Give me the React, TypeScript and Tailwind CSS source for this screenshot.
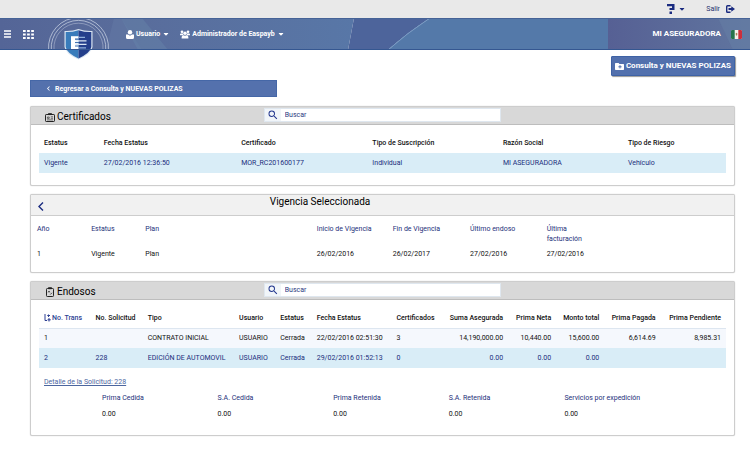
import type { ReactNode } from "react";
import { FaCaretDown } from "react-icons/fa";
import { MdChevronLeft, MdSearch } from "react-icons/md";

const certificate = [
  { label: "Estatus", value: "Vigente", width: "w-[8.7%]" },
  { label: "Fecha Estatus", value: "27/02/2016 12:36:50", width: "w-[20%]" },
  { label: "Certificado", value: "MOR_RC201600177", width: "w-[19.1%]" },
  { label: "Tipo de Suscripción", value: "Individual", width: "w-[19%]" },
  { label: "Razón Social", value: "MI ASEGURADORA", width: "w-[18.2%]" },
  { label: "Tipo de Riesgo", value: "Vehículo", width: "w-[15%]" },
];

const period = [
  { label: "Año", value: "1", width: "w-[7.7%]" },
  { label: "Estatus", value: "Vigente", width: "w-[7.7%]" },
  { label: "Plan", value: "Plan", width: "w-[24.4%]" },
  { label: "Inicio de Vigencia", value: "26/02/2016", width: "w-[10.8%]" },
  { label: "Fin de Vigencia", value: "26/02/2017", width: "w-[11%]" },
  { label: "Último endoso", value: "27/02/2016", width: "w-[10.9%]" },
  { label: "Última\nfacturación", value: "27/02/2016", width: "w-[27.5%]" },
];

const endorsementColumns = [
  { label: "No. Trans", width: "w-[7.5%]", numeric: false },
  { label: "No. Solicitud", width: "w-[7.6%]", numeric: false },
  { label: "Tipo", width: "w-[13.3%]", numeric: false },
  { label: "Usuario", width: "w-[6%]", numeric: false },
  { label: "Estatus", width: "w-[5.3%]", numeric: false },
  { label: "Fecha Estatus", width: "w-[11.6%]", numeric: false },
  { label: "Certificados", width: "w-[7.1%]", numeric: false },
  { label: "Suma Asegurada", width: "w-[9.9%]", numeric: true },
  { label: "Prima Neta", width: "w-[7%]", numeric: true },
  { label: "Monto total", width: "w-[7%]", numeric: true },
  { label: "Prima Pagada", width: "w-[8.2%]", numeric: true },
  { label: "Prima Pendiente", width: "w-[9.5%]", numeric: true },
];

const endorsements = [
  ["1", "", "CONTRATO INICIAL", "USUARIO", "Cerrada", "22/02/2016 02:51:30", "3", "14,190,000.00", "10,440.00", "15,600.00", "6,614.69", "8,985.31"],
  ["2", "228", "EDICIÓN DE AUTOMOVIL", "USUARIO", "Cerrada", "29/02/2016 01:52:13", "0", "0.00", "0.00", "0.00", "", ""],
];

const details = ["Prima Cedida", "S.A. Cedida", "Prima Retenida", "S.A. Retenida", "Servicios por expedición"];

function NavArt() {
  return (
    <svg aria-hidden="true" className="absolute inset-0 h-full w-full" preserveAspectRatio="none" viewBox="0 0 750 32">
      <defs>
        <linearGradient id="nav-left" x1="0" x2="1">
          <stop offset="0" stopColor="#546597" />
          <stop offset="0.35" stopColor="#596c9b" />
          <stop offset="1" stopColor="#5877a7" />
        </linearGradient>
        <linearGradient id="nav-right" x1="0" x2="1">
          <stop offset="0" stopColor="#566094" />
          <stop offset="1" stopColor="#60759f" />
        </linearGradient>
      </defs>
      <path d="M0 0H354L348 32H0Z" fill="url(#nav-left)" />
      <path d="M114 0H121L142 32H106Z" fill="#647aa5" opacity="0.5" />
      <path d="M121 0H142L168 32H138Z" fill="#6684aa" opacity="0.45" />
      <path d="M354 0H430Q407 15 388 32H348Z" fill="#4d649b" />
      <path d="M430 0H608V32H388Q407 15 430 0Z" fill="#5479a9" />
      <path d="M430 0Q407 15 388 32" fill="none" stroke="#789ac2" />
      <path d="M608 0H750V32H608Z" fill="url(#nav-right)" />
      <path d="M718 0H750V32H733Z" fill="#6680a5" opacity="0.5" />
    </svg>
  );
}

function ShieldLogo() {
  return (
    <svg aria-label="Easpayb" className="absolute top-0 left-12 h-[42px] w-[62px]" role="img" viewBox="0 0 62 42">
      <g fill="none" stroke="#c3cde0" strokeWidth="0.8">
        <path d="M0.6 32A30 30 0 1 1 60.4 32" />
        <path d="M3.3 32A27.3 27.3 0 1 1 57.7 32" />
        <path d="M6 32A24.6 24.6 0 1 1 55 32" opacity="0.6" />
      </g>
      <path d="M30.5 11Q37 13.5 44.5 13V29Q43.5 36 30.5 41.5Q17.5 36 16.5 29V13Q24 13.5 30.5 11Z" fill="#dbe6f2" />
      <path d="M30.5 12.2Q24 14.3 17.7 14V29Q18.7 35 30.5 40.4Z" fill="#397cbb" />
      <path d="M30.5 12.2Q37 14.3 43.3 14V29Q42.3 35 30.5 40.4Z" fill="#243f8b" />
      <path d="M23 18.2H30.5V31H23Z" fill="#fff" />
      <path d="M27 21.2H31M27 28H31" stroke="#3166a9" strokeWidth="1.2" />
      <path d="M27 24.6H31" stroke="#3166a9" />
      <path d="M27.5 22.8H38.5M27.5 26.4H38.5" stroke="#dce7f4" strokeWidth="1.3" />
      <path d="M30.5 19.4H37M30.5 29.8H38" stroke="#8fb0da" strokeWidth="1.2" />
    </svg>
  );
}

function HelpIcon() {
  return (
    <svg aria-hidden="true" className="h-[10px] w-2" fill="#1a2b80" viewBox="0 0 8 10">
      <path d="M0 0H7.5V6H2.5V4H5V2.3H0Z" />
      <path d="M2.5 7.5H5V10H2.5Z" />
    </svg>
  );
}

function ExitIcon() {
  return (
    <svg aria-hidden="true" className="h-2 w-[9px]" viewBox="0 0 9 8">
      <path d="M4.5 0.7H1.5Q0.7 0.7 0.7 1.5V6.5Q0.7 7.3 1.5 7.3H4.5" fill="none" stroke="#1a2b80" strokeWidth="1.4" />
      <path d="M2.5 3H5.3V1.2L9 4L5.3 6.8V5H2.5Z" fill="#1a2b80" />
    </svg>
  );
}

function UserIcon() {
  return (
    <svg aria-hidden="true" className="h-[9px] w-2" viewBox="0 0 8 9">
      <circle cx="4" cy="2.2" fill="#fff" r="2.2" />
      <path d="M0 4.5H2L4 5.8L6 4.5H8V7.5Q8 9 6.5 9H1.5Q0 9 0 7.5Z" fill="#fff" />
    </svg>
  );
}

function UsersIcon() {
  return (
    <svg aria-hidden="true" className="h-[9px] w-[10px]" fill="#fff" viewBox="0 0 11 9">
      <circle cx="2.2" cy="1.6" r="1.5" />
      <circle cx="8.8" cy="1.6" r="1.5" />
      <circle cx="5.5" cy="3.2" r="1.9" />
      <path d="M0 5.4V4.4Q0 3.3 1 3.3H3.2Q3.3 4.7 4 5.4Z" />
      <path d="M11 5.4V4.4Q11 3.3 10 3.3H7.8Q7.7 4.7 7 5.4Z" />
      <path d="M1.8 9V7.4Q1.8 5.4 3.6 5.4Q5.5 6.4 7.4 5.4Q9.2 5.4 9.2 7.4V9Z" />
    </svg>
  );
}

function FlagIcon() {
  return (
    <svg aria-label="México" className="h-[9px] w-[11px]" role="img" viewBox="0 0 11 9">
      <rect fill="#f4f1ea" height="9" rx="1" width="11" />
      <path d="M1 0H3.7V9H1Q0 9 0 8V1Q0 0 1 0Z" fill="#26734b" />
      <path d="M7.3 0H10Q11 0 11 1V8Q11 9 10 9H7.3Z" fill="#cc2f3c" />
      <path d="M4.6 3.5L5.5 2.7L6.5 3.7L6 5.5H5Z" fill="#a08457" />
    </svg>
  );
}

function FolderIcon() {
  return (
    <svg aria-hidden="true" className="h-[7px] w-[9px]" viewBox="0 0 9 7">
      <path d="M0.7 0H3.6L4.4 0.9H8.3Q9 0.9 9 1.6V6.3Q9 7 8.3 7H0.7Q0 7 0 6.3V0.7Q0 0 0.7 0Z" fill="#fff" />
      <path d="M5 2.2V5.4M3.4 3.8H6.6" stroke="#5270ad" />
    </svg>
  );
}

function CertificateIcon() {
  return (
    <svg aria-hidden="true" className="h-[9px] w-[10px]" fill="none" stroke="#222" viewBox="0 0 10 9">
      <rect height="7" rx="0.7" width="9" x="0.5" y="1.5" />
      <path d="M3.5 0.3H6.5V1.6H3.5Z" fill="#222" strokeWidth="0.6" />
      <path d="M2.4 4H4.2V5.4H2.4ZM5.8 3.8H8M5.8 5.3H8M2 6.9H8" strokeWidth="0.6" />
    </svg>
  );
}

function EndorsementIcon() {
  return (
    <svg aria-hidden="true" className="h-[10px] w-[10px]" fill="none" stroke="#222" viewBox="0 0 10 10">
      <rect height="8" rx="0.8" width="7" x="1.5" y="1.5" />
      <path d="M3.5 0.5H6.5V1.8H3.5Z" fill="#222" strokeWidth="0.6" />
      <path d="M3.3 4L4.7 5.4M4.7 4L3.3 5.4M5.3 7.5L7 5.8" strokeWidth="0.8" />
    </svg>
  );
}

function SortIcon() {
  return (
    <svg aria-hidden="true" className="h-2 w-[7px] shrink-0" fill="none" stroke="#2c3f93" viewBox="0 0 7 8">
      <path d="M1 0V6.5H3M4.5 0.5V3M3.3 1.5H6M5 4V7.5M3.5 5.8H6.8" />
    </svg>
  );
}

function SearchBox({ id }: { id: string }) {
  return (
    <div className="ml-[33.1%] flex h-[14px] w-[33.8%] border border-[#dfe7ef] bg-white">
      <label className="flex w-4 items-center justify-center bg-[#f1f5f9] text-[#24388f]" htmlFor={id}>
        <MdSearch aria-label="Buscar" size={12} />
      </label>
      <input
        className="min-w-0 flex-1 px-1 text-[7px] leading-3 text-[#2b3a80] outline-none placeholder:text-[#2b3a80] placeholder:opacity-100"
        id={id}
        placeholder="Buscar"
        type="text"
      />
    </div>
  );
}

function Panel({ children, header }: { children: ReactNode; header: ReactNode }) {
  return (
    <section className="rounded-xs border border-[#cdcdcd] bg-white shadow-[0_0_1px_#bbb]">
      {header}
      {children}
    </section>
  );
}

function PanelHeader({ icon, id, title }: { icon: ReactNode; id: string; title: string }) {
  return (
    <header className="relative h-[18px] border-b border-[#bdbdbd] bg-[#d8d8d8] pt-px">
      <h2 className="absolute top-1 left-[14px] flex items-center gap-[2px] text-[10px] leading-3 text-black">
        {icon}
        {title}
      </h2>
      <SearchBox id={id} />
    </header>
  );
}

export default function App() {
  return (
    <div className="min-h-screen bg-white font-['Roboto',sans-serif] text-[7px] leading-[10px] text-[#111]">
      <div className="flex h-[18px] items-center justify-end bg-[#e9e9e9] pr-[15px] text-[#26336f]">
        <button className="mr-5 flex items-center gap-[3px]" type="button" aria-label="Ayuda">
          <HelpIcon />
          <FaCaretDown size={8} color="#1a2b80" />
        </button>
        <a className="flex items-center gap-[6px]" href="#salir">
          Salir
          <ExitIcon />
        </a>
      </div>

      <nav className="relative h-8 text-white">
        <NavArt />
        <ShieldLogo />
        <div className="relative flex h-full items-center border-t border-b border-t-[#466397] border-b-[#355791] pr-2 pl-1 font-bold">
          <button aria-label="Menú" type="button">
            <svg className="h-2 w-[7px]" fill="none" stroke="#fff" strokeWidth="1.5" viewBox="0 0 7 8">
              <path d="M0 1H7M0 4H7M0 7H7" />
            </svg>
          </button>
          <button aria-label="Aplicaciones" className="ml-3" type="button">
            <svg className="h-[9px] w-[11px]" fill="none" stroke="#fff" strokeDasharray="2.7 1.4" strokeWidth="2" viewBox="0 0 11 9">
              <path d="M0 1H11M0 4.5H11M0 8H11" />
            </svg>
          </button>
          <button className="ml-[92px] flex items-center gap-[2px]" type="button">
            <UserIcon />
            Usuario
            <FaCaretDown size={8} />
          </button>
          <button className="ml-[10px] flex items-center gap-[2px]" type="button">
            <UsersIcon />
            Administrador de Easpayb
            <FaCaretDown size={8} />
          </button>
          <div className="ml-auto flex items-center gap-[10px] text-[8px]">
            MI ASEGURADORA
            <FlagIcon />
          </div>
        </div>
      </nav>

      <main className="pr-[15px] pl-[30px]">
        <div className="flex justify-end pt-[6px]">
          <button
            className="flex h-5 items-center gap-[2px] rounded-[1px] border border-[#3e62a5] bg-[#5270ad] px-[3px] text-[8px] font-bold text-white shadow-[1px_1px_1px_#999]"
            type="button"
          >
            <FolderIcon />
            Consulta y NUEVAS POLIZAS
          </button>
        </div>
        <a
          className="mt-1 flex h-[17px] w-[35.1%] items-center gap-[2px] border border-[#4567a7] bg-[#5471ad] pl-[13px] font-bold text-white"
          href="#polizas"
        >
          <MdChevronLeft size={9} />
          Regresar a Consulta y NUEVAS POLIZAS
        </a>

        <div className="mt-[9px] flex flex-col gap-2">
          <Panel header={<PanelHeader icon={<CertificateIcon />} id="buscar-certificado" title="Certificados" />}>
            <div className="px-2 pt-2 pb-3">
              <table className="w-full table-fixed text-left">
                <thead>
                  <tr className="h-5">
                    {certificate.map((item) => (
                      <th className={`${item.width} px-[5px] font-medium whitespace-nowrap`} key={item.label}>
                        {item.label}
                      </th>
                    ))}
                  </tr>
                </thead>
                <tbody>
                  <tr className="h-5 bg-[#d9edf7] text-[#202e7c]">
                    {certificate.map((item) => (
                      <td className="px-[5px] whitespace-nowrap" key={item.label}>
                        {item.value}
                      </td>
                    ))}
                  </tr>
                </tbody>
              </table>
            </div>
          </Panel>

          <Panel
            header={
              <header className="relative h-[21px] border-b border-[#cdcdcd] bg-[#f1f1f1]">
                <button aria-label="Regresar" className="absolute top-[7px] left-[7px]" type="button">
                  <svg className="h-[9px] w-[6px]" fill="none" stroke="#1a2b80" strokeWidth="1.4" viewBox="0 0 6 9">
                    <path d="M5 0.5L1 4.5L5 8.5" />
                  </svg>
                </button>
                <h2 className="pr-[125px] text-center text-[10px] leading-[14px] text-black">Vigencia Seleccionada</h2>
              </header>
            }
          >
            <div className="pt-2 pb-3">
              <table className="w-full table-fixed text-left">
                <thead>
                  <tr className="h-6 align-top text-[#24307a]">
                    {period.map((item) => (
                      <th className={`${item.width} px-[6px] font-normal whitespace-pre`} key={item.label}>
                        {item.label}
                      </th>
                    ))}
                  </tr>
                </thead>
                <tbody>
                  <tr className="h-3">
                    {period.map((item) => (
                      <td className="px-[6px]" key={item.label}>
                        {item.value}
                      </td>
                    ))}
                  </tr>
                </tbody>
              </table>
            </div>
          </Panel>

          <Panel header={<PanelHeader icon={<EndorsementIcon />} id="buscar-endoso" title="Endosos" />}>
            <div className="px-2 pt-2 pb-4">
              <table className="w-full table-fixed text-left">
                <thead>
                  <tr className="h-5 border-b border-[#dde6f0]">
                    {endorsementColumns.map((column, index) => (
                      <th
                        className={`${column.width} px-[5px] font-medium whitespace-nowrap ${column.numeric ? "text-right" : ""}`}
                        key={column.label}
                      >
                        {index === 0 ? (
                          <span className="flex items-center gap-px text-[#2c3f93]">
                            <SortIcon />
                            {column.label}
                          </span>
                        ) : (
                          column.label
                        )}
                      </th>
                    ))}
                  </tr>
                </thead>
                <tbody>
                  {endorsements.map((row) => (
                    <tr
                      className={row[0] === "2" ? "h-5 bg-[#d9edf7] text-[#202e7c]" : "h-5 bg-[#f5f8fd]"}
                      key={row[0]}
                    >
                      {row.map((cell, index) => (
                        <td
                          className={`px-[5px] whitespace-nowrap ${endorsementColumns[index].numeric ? "text-right" : ""}`}
                          key={endorsementColumns[index].label}
                        >
                          {cell}
                        </td>
                      ))}
                    </tr>
                  ))}
                </tbody>
              </table>
              <a className="mt-[9px] ml-[5px] inline-block text-[#4c669f] underline" href="#detalle">
                Detalle de la Solicitud: 228
              </a>
              <dl className="mt-[6px] grid grid-cols-5 pr-[46px] pl-[63px]">
                {details.map((label) => (
                  <div key={label}>
                    <dt className="text-[#24307a]">{label}</dt>
                    <dd className="mt-[6px]">0.00</dd>
                  </div>
                ))}
              </dl>
            </div>
          </Panel>
        </div>
      </main>
    </div>
  );
}
